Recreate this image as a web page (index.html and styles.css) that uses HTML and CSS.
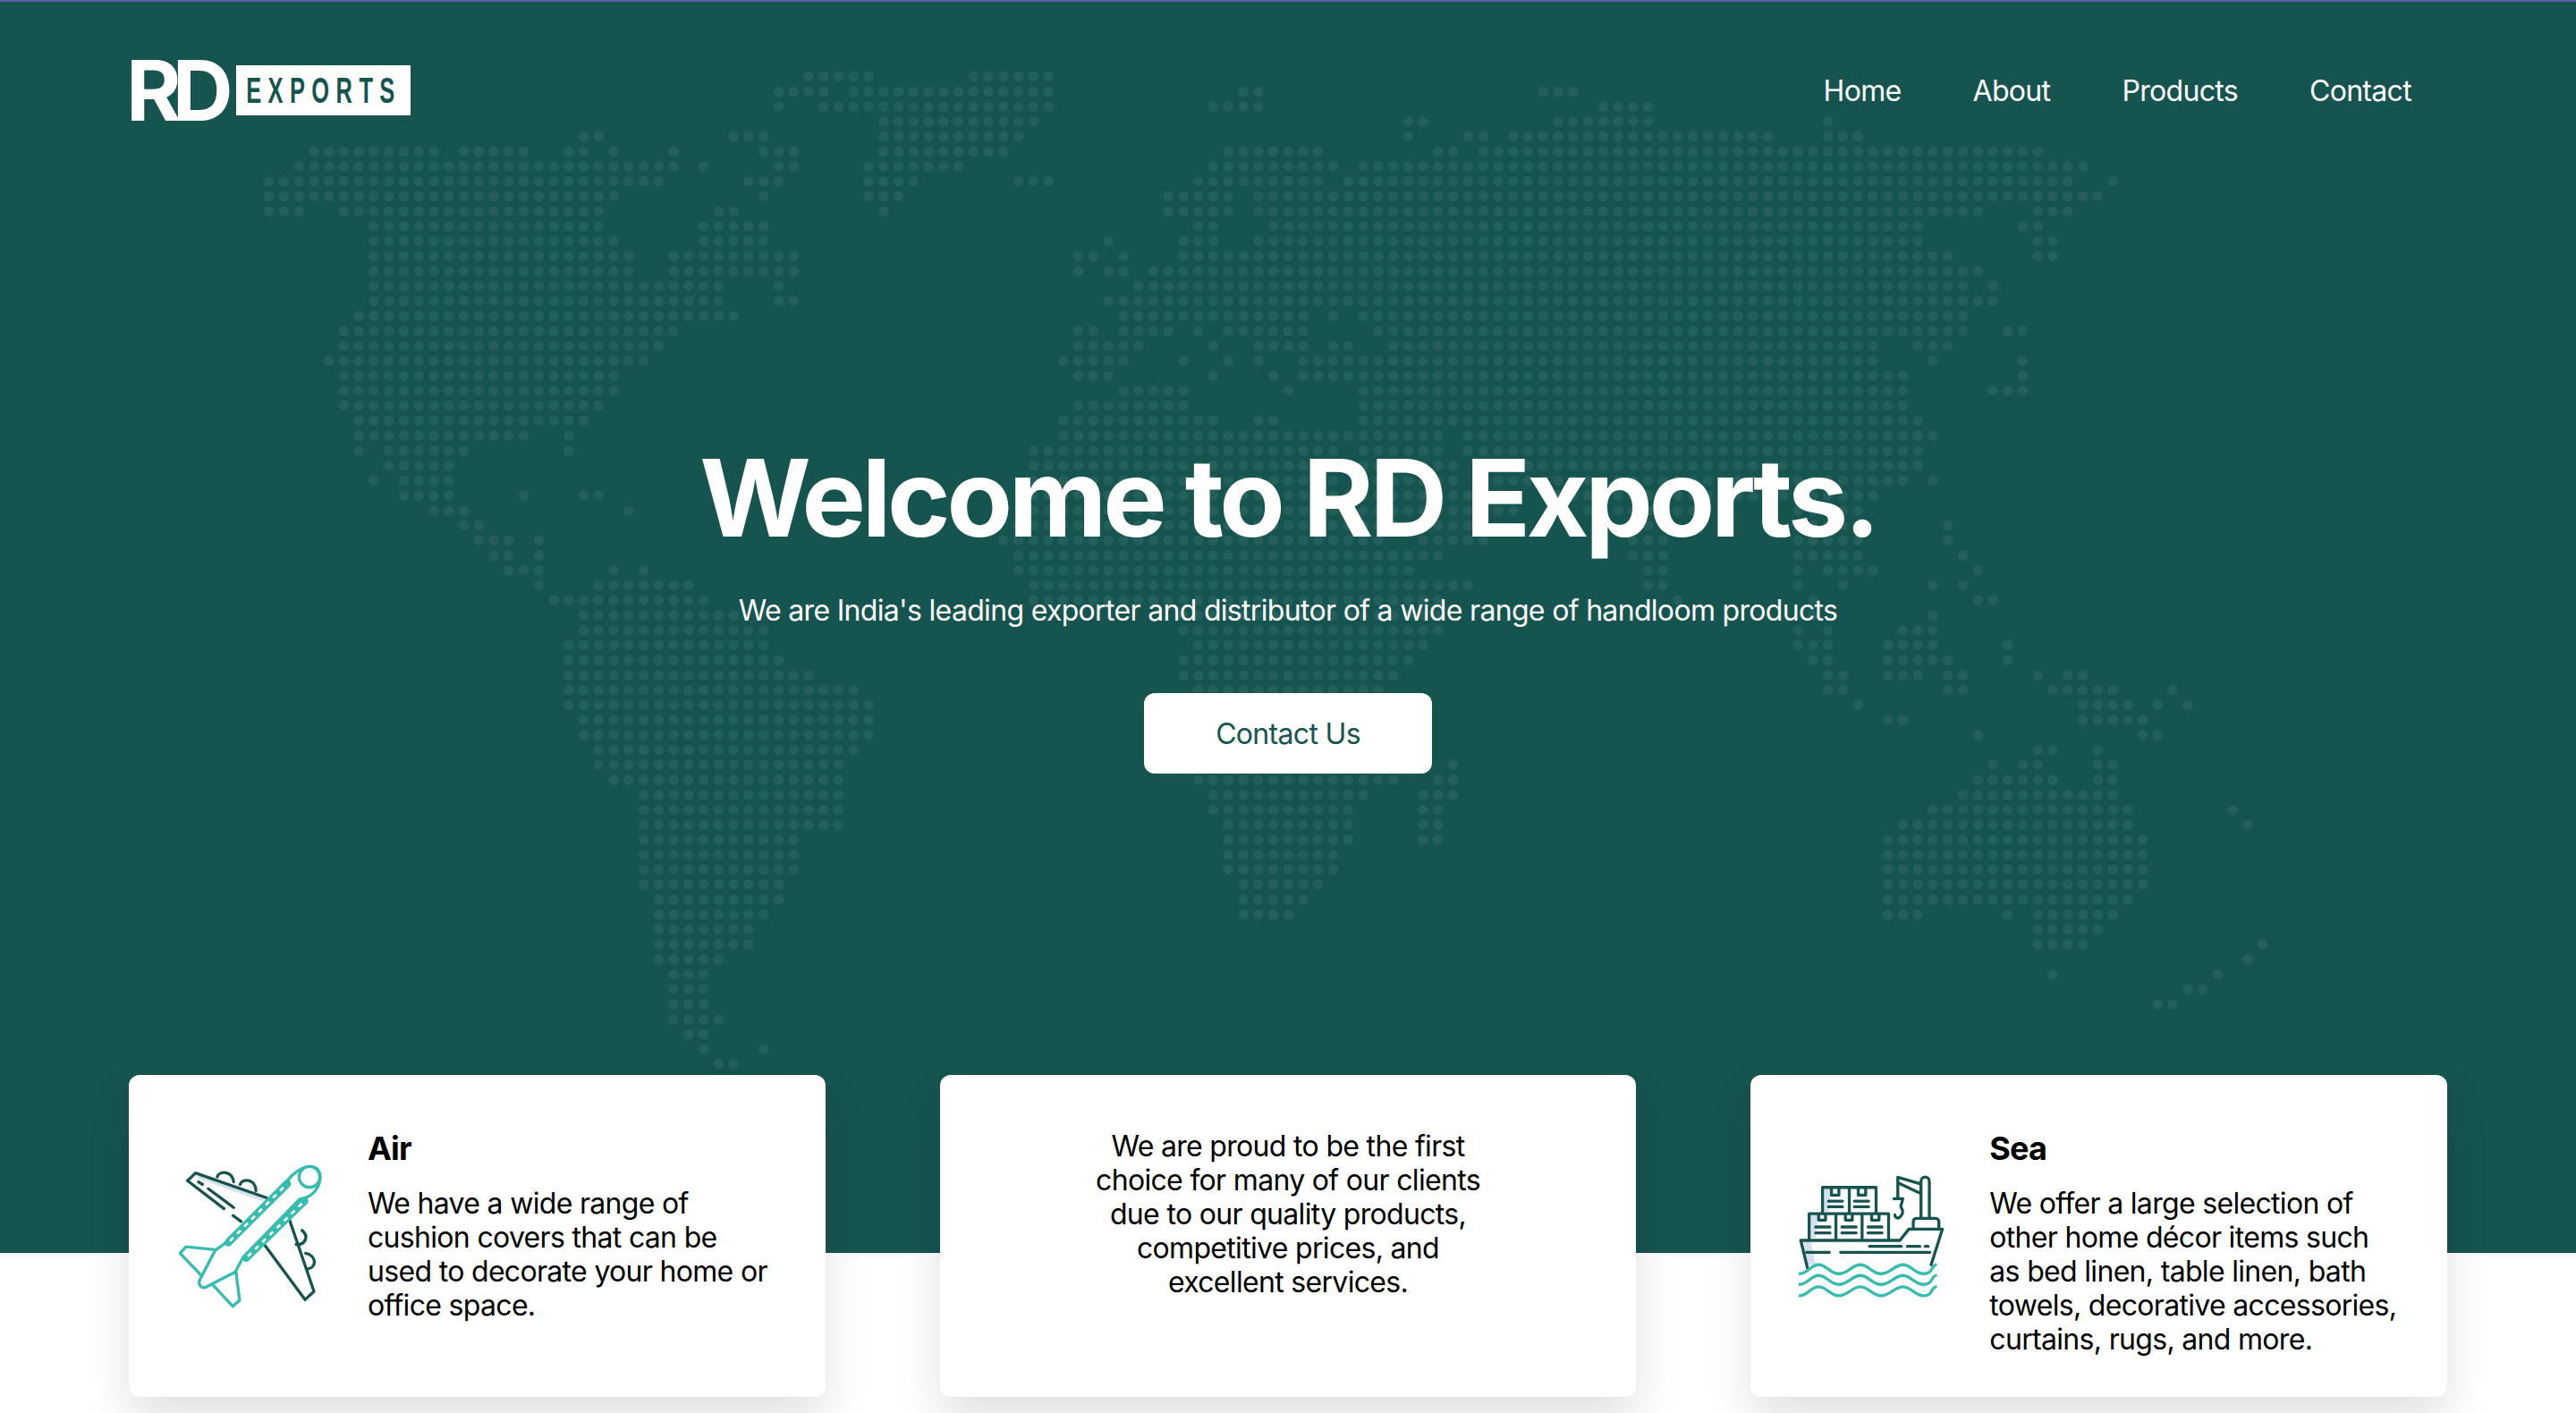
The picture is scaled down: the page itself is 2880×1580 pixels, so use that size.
FILE: index.html
```html
<!DOCTYPE html>
<html lang="en">
<head>
<meta charset="utf-8">
<title>RD Exports</title>
<link rel="stylesheet" href="styles.css">
</head>
<body>
<section class="hero">
  <svg class="world" viewBox="0 0 2880 1399" aria-hidden="true"><path id="world-dots" class="world-dots" d=""/></svg>
  <header class="nav">
    <a class="logo" href="#"><span class="logo-mark">RD</span><span class="logo-tag"><span class="logo-word">EXPORTS</span></span></a>
    <nav class="links">
      <a href="#">Home</a>
      <a href="#">About</a>
      <a href="#">Products</a>
      <a href="#">Contact</a>
    </nav>
  </header>
  <div class="intro">
    <h1>Welcome to RD Exports.</h1>
    <p>We are India's leading exporter and distributor of a wide range of handloom products</p>
    <a class="cta" href="#">Contact Us</a>
  </div>
</section>
<section class="cards">
  <article class="card">
    <svg class="icon plane" viewBox="50 60 490 490" aria-hidden="true">
      <path class="fill-soft" d="M112 98 352 178 338 188 125 112Z"/>
      <g class="dark">
        <path d="M350 175 112 92 85 118 208 212M155 145 240 208M122 122 135 130M238 235 265 255"/>
        <path d="M185 105C192 82 235 85 240 122M262 130C268 108 315 112 315 152"/>
        <path d="M428 250 510 490 480 518 345 335"/>
        <path d="M450 332C480 335 495 305 470 285M488 415C520 410 520 370 482 362"/>
      </g>
      <path class="fuselage" d="M178 352 205 333 420 118C440 92 470 70 500 70 530 72 535 100 528 125 520 150 505 172 462 180L272 375 245 425 150 474C130 484 118 465 128 448Z"/>
      <circle class="teal" cx="495" cy="105" r="35"/>
      <path class="teal" d="M178 350 80 340 60 362 133 438M172 470 237 540 260 520 248 425"/>
      <path class="band" d="M222 326 420 128M282 378 478 186"/>
      <path class="band-gap" d="M228 320 414 134M288 372 472 192"/>
    </svg>
    <div class="card-text">
      <h2>Air</h2>
      <p>We have a wide range of cushion covers that can be used to decorate your home or office space.</p>
    </div>
  </article>
  <article class="card card-center">
    <p>We are proud to be the first choice for many of our clients due to our quality products, competitive prices, and excellent services.</p>
  </article>
  <article class="card">
    <svg class="icon ship" viewBox="65 65 490 420" aria-hidden="true">
      <path class="fill-soft" d="M150 118H175L165 192H150ZM105 205H132L122 282H105ZM82 295H106L122 372H96Z"/>
      <g class="dark">
        <path d="M145 197V112H325V197M235 112V197M100 285V200H367V285M190 200V285M278 200V285"/>
        <path d="M175 116V138H200V116M265 116V138H290V116M132 202V222H155V202M222 202V222H245V202M310 202V222H335V202"/>
        <path d="M165 158H212M165 177H212M252 158H300M252 177H300M122 245H170M122 265H170M210 245H258M210 265H258M298 245H345M298 265H345"/>
        <path d="M398 78 475 100M398 96 470 130M398 78V148M385 150H415L408 176C408 180 425 195 405 212 395 220 388 210 388 204"/>
        <path d="M476 210V92C476 72 504 72 504 92V210M450 250V228C450 220 455 216 462 216H525C532 216 536 222 536 228V250"/>
        <path d="M95 385 72 290H405L435 252H548L510 372M92 330H168M206 330H506M303 310H410M430 310H472M490 310H500"/>
      </g>
      <path class="wave" d="M68 402C95 402 105 372 132 372S170 402 200 402 245 372 272 372 312 402 342 402 388 372 415 372 455 402 485 402 510 378 525 372M68 438C95 438 105 408 132 408S170 438 200 438 245 408 272 408 312 438 342 438 388 408 415 408 455 438 485 438 510 412 525 408M68 476C95 476 105 446 132 446S170 476 200 476 245 446 272 446 312 476 342 476 388 446 415 446 455 476 485 476 510 450 525 446"/>
    </svg>
    <div class="card-text">
      <h2>Sea</h2>
      <p>We offer a large selection of other home décor items such as bed linen, table linen, bath towels, decorative accessories, curtains, rugs, and more.</p>
    </div>
  </article>
</section>
<script src="map.js"></script>
</body>
</html>
```
FILE: styles.css
```css
* { box-sizing: border-box; }
html, body { margin: 0; background: #fff; }
body { font-family: Inter, "Noto Sans", sans-serif; color: #000; letter-spacing: -.68px; }
a { color: inherit; text-decoration: none; }

.hero {
  position: relative;
  height: 1401px;
  background: #165450;
  border-top: 2px solid #5a5ea6;
  color: #fff;
}
.world { position: absolute; left: 0; top: -2px; width: 2880px; height: 1399px; }
.world-dots {
  fill: none;
  stroke: #245f5b;
  stroke-width: 11.5;
  stroke-linecap: round;
  stroke-dasharray: 0 16.76;
}

.nav {
  position: relative;
  display: flex;
  justify-content: space-between;
  align-items: center;
  padding: 63px 184px 0 144px;
}
.logo { display: flex; align-items: center; gap: 8px; height: 72px; }
.logo-mark {
  width: 115px;
  margin-left: -3px;
  font-size: 94px;
  font-weight: 700;
  line-height: 72px;
  letter-spacing: -10px;
}
.logo-tag {
  display: flex;
  justify-content: center;
  align-items: center;
  width: 195px;
  height: 56px;
  background: #fff;
  color: #165450;
  overflow: hidden;
}
.logo-word {
  flex: none;
  font-family: "Liberation Sans", sans-serif;
  font-size: 41px;
  font-weight: 700;
  line-height: 56px;
  letter-spacing: 12px;
  transform: scaleX(.62);
}
.links { display: flex; gap: 80px; font-size: 32px; line-height: 40px; padding-top: 2px; }

.intro {
  position: relative;
  display: flex;
  flex-direction: column;
  align-items: center;
  padding-top: 354px;
}
.intro h1 {
  margin: 0;
  font-size: 120px;
  line-height: 132px;
  font-weight: 700;
  letter-spacing: -4.2px;
}
.intro p { margin: 38px 0 0; font-size: 32px; line-height: 44px; }
.cta {
  margin-top: 70px;
  width: 322px;
  height: 90px;
  border-radius: 12px;
  background: #fff;
  color: #165450;
  font-size: 32px;
  line-height: 92px;
  text-align: center;
}

.cards {
  position: relative;
  display: grid;
  grid-template-columns: repeat(3, 1fr);
  gap: 128px;
  margin-top: -199px;
  padding: 0 144px 18px;
}
.card {
  display: flex;
  gap: 50px;
  height: 360px;
  padding: 60px 54px 46px;
  background: #fff;
  border-radius: 12px;
  box-shadow: 0 24px 50px rgba(0, 0, 0, .12);
}
.icon { flex: none; width: 163px; align-self: center; margin-bottom: 14px; }
.plane { height: 163px; }
.ship { height: 140px; }
.card-text { flex: 1; }
.card h2 { margin: 0 0 21px; font-size: 36px; line-height: 44px; font-weight: 700; letter-spacing: -.9px; }
.card p { margin: 0; font-size: 32px; line-height: 38px; }
.card-center { justify-content: center; padding-top: 61px; text-align: center; }
.card-center p { width: 456px; }

.icon path, .icon circle { fill: none; stroke-linecap: round; stroke-linejoin: round; }
.icon .fill-soft { fill: #d6e0f0; stroke: none; }
.dark path { stroke: #165450; stroke-width: 10; }
.teal, .fuselage, .wave { stroke: #36bdb0; stroke-width: 10; }
.icon .fuselage, .icon circle { fill: #fff; }
.band { stroke: #36bdb0; stroke-width: 26; }
.band-gap { stroke: #fff; stroke-width: 8; stroke-dasharray: 16 18; stroke-linecap: butt !important; }
```
FILE: map.js
```js
var ROWS = [
"36-40,47-52","34-37,39-52,65-66,85-87","34,37-52,63-66,89-92","41-51,76-77,86-92,104",
"21-22,31-33,41-50,76,80-81,83-100,104-106","3-11,13-17,20-21,23,27,33-35,41-49,64-70,78-79,81-118",
"2-27,29,34-35,40-46,63-71,73-121","0-26,32-34,40-43,50-52,62-70,72-120,123",
"0-23,33,40-42,60-64,66-122","0-2,5-22,30-31,41,60-64,66-114,118-120",
"7-22,29-33,62-63,67-110,117-118","7-23,29-33,56,61-63,66-110,118-119",
"7-24,27-35,54-55,57,61-112,118-119","7-24,27-35,54,56-57,59-114",
"7-30,34,58-113,115","7-30,34-35,56-115","6-31,57-69,71,73-113",
"5-27,54-55,57-60,62,64-69,74-113,116-117","5-26,54-58,63,66-69,71-72,75-107,110-112",
"4-25,53-57,61,64,66,69-107,111,117","5-23,54-56,63,67,69-109,117","5-23,57-61,68,73-109,115-117",
"5-22,54-61,73-109","6-21,53-63,66-67,73-110","6-17,20,53-78,80-111","6,8-13,20,51-71,73-78,80-110",
"8-12,51-71,73-79,81-110","7,9-12,51-71,73-79,81-109,111","9-12,17,21-22,51-83,86-107",
"11-13,24,51-80,82-83,88-95,102-106","13-14,50-80,91-93,102-106,112",
"14-16,18,49-74,77-81,91-93,102-106,112","15-16,18,50-78,91-93,102-106,113",
"16-18,23,25,50-76,92-93,102,104-107,114","18,22-28,51-80,92-93,102,105,111,113",
"19-29,51-78,94,103,114-115","21-31,61-78,103,111","21-33,61-78,102,104,109-111",
"20-33,62-77,102-104,108-111,116","20-34,61-76,103-104,108-112,116",
"20-36,61-75,104-105,108-110,112-113,118,120-121","20-39,62-74,104-105,112-113,119-123,127",
"20-40,106,121-124,126,128","21-40,108-109,121-125","21-40,114,125-126","22-39,118-119,122",
"22-38,79,115,117-118,122-123","23-38,62-75,78-79,114-119,122-123","25-38,63-73,77-79,113-123",
"25-38,63-72,77-78,111-124,131","25-38,64-72,77-78,109-124,132","25-35,64-72,77-78,108-125",
"25-35,64-71,108-125","25-35,64-71,108-125","25-34,65-70,108-125","26-34,65-69,108-124",
"26-33,65-68,108-110,116,118-123","26-32,118-122","26-32,118-121,133","26-30,132","27-29,119,130",
"27-29,128-129","27-29,126-127","27-30","28-29","29,33","30-31"
];
var X0 = 300.6, Y0 = 85.7, PX = 16.76, PY = 16.73;
var d = "";
ROWS.forEach(function (row, r) {
  var y = (Y0 + r * PY).toFixed(1);
  row.split(",").forEach(function (run) {
    var parts = run.split("-");
    var a = +parts[0];
    var b = parts.length > 1 ? +parts[1] : a;
    d += "M" + (X0 + a * PX).toFixed(1) + " " + y + "h" + ((b - a) * PX + 0.01).toFixed(2);
  });
});
document.getElementById("world-dots").setAttribute("d", d);
```
